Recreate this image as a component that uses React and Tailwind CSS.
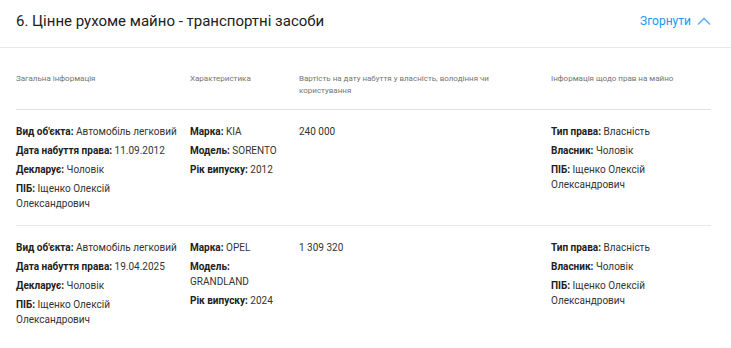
import React from 'react'

const rows = [
  {
    general: [
      ['Вид об\'єкта', 'Автомобіль легковий'],
      ['Дата набуття права', '11.09.2012'],
      ['Декларує', 'Чоловік'],
      ['ПІБ', 'Іщенко Олексій Олександрович'],
    ],
    specs: [
      ['Марка', 'KIA'],
      ['Модель', 'SORENTO'],
      ['Рік випуску', '2012'],
    ],
    cost: '240 000',
    rights: [
      ['Тип права', 'Власність'],
      ['Власник', 'Чоловік'],
      ['ПІБ', 'Іщенко Олексій Олександрович'],
    ],
  },
  {
    general: [
      ['Вид об\'єкта', 'Автомобіль легковий'],
      ['Дата набуття права', '19.04.2025'],
      ['Декларує', 'Чоловік'],
      ['ПІБ', 'Іщенко Олексій Олександрович'],
    ],
    specs: [
      ['Марка', 'OPEL'],
      ['Модель', 'GRANDLAND'],
      ['Рік випуску', '2024'],
    ],
    cost: '1 309 320',
    rights: [
      ['Тип права', 'Власність'],
      ['Власник', 'Чоловік'],
      ['ПІБ', 'Іщенко Олексій Олександрович'],
    ],
  },
]

function Field({ label, value }) {
  return (
    <div className="leading-[15px]">
      <span className="font-bold text-[#212121]">{label}:</span> {value}
    </div>
  )
}

function FieldList({ items, className = '' }) {
  return (
    <div className={`flex flex-col gap-[4px] pr-2 ${className}`}>
      {items.map(([l, v], i) => (
        <Field key={i} label={l} value={v} />
      ))}
    </div>
  )
}

export default function App() {
  return (
    <div className="w-[731px] h-[348px] bg-white overflow-hidden font-['Roboto',sans-serif]">
      <header className="flex items-center justify-between pl-4 pr-5 pt-3 pb-[17px] border-b border-[#e8e8e8]">
        <h2 className="text-[15px] leading-[18px] text-[#212121]">6. Цінне рухоме майно - транспортні засоби</h2>
        <button className="flex items-center gap-[6px] text-[12px] leading-[18px] text-[#2196f3]">
          Згорнути
          <svg width="14" height="9" viewBox="0 0 14 9" fill="none">
            <polyline points="1,7.5 7,1.5 13,7.5" stroke="#64b5f6" strokeWidth="1.6" />
          </svg>
        </button>
      </header>

      <div className="ml-4 mr-5">
        <div className="grid grid-cols-[174px_109px_252px_1fr] pt-[25px] pb-[12px] border-b border-[#e0e0e0] text-[8px] leading-[12px] text-[#757575]">
          <div>Загальна інформація</div>
          <div>Характеристика</div>
          <div className="pr-10">Вартість на дату набуття у власність, володіння чи користування</div>
          <div>Інформація щодо прав на майно</div>
        </div>

        {rows.map((r, i) => (
          <div
            key={i}
            className={`grid grid-cols-[174px_109px_252px_1fr] pt-[14px] pb-[14px] text-[10px] text-[#333] ${i === 0 ? 'border-b border-[#e8e8e8]' : ''}`}
          >
            <FieldList items={r.general} />
            <FieldList items={r.specs} />
            <div className="leading-[15px]">{r.cost}</div>
            <FieldList items={r.rights} className="pr-6" />
          </div>
        ))}
      </div>
    </div>
  )
}
